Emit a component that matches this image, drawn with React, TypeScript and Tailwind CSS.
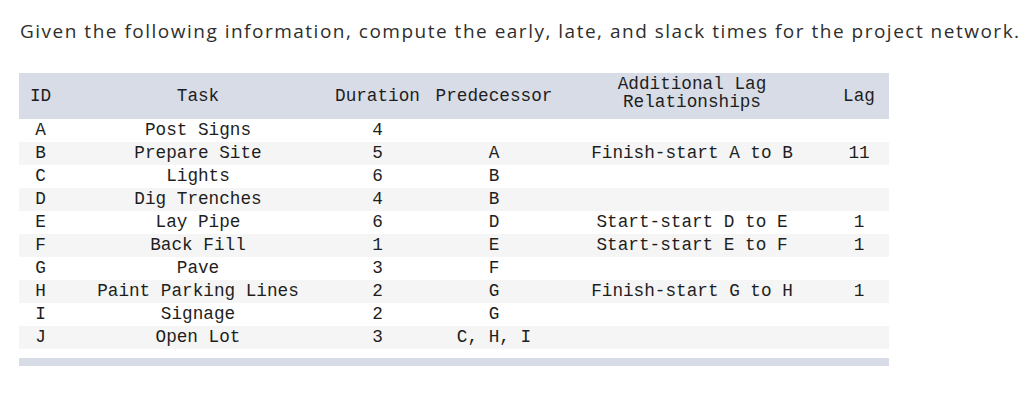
import React from "react";

const rows = [
  ["A", "Post Signs", "4", "", "", ""],
  ["B", "Prepare Site", "5", "A", "Finish-start A to B", "11"],
  ["C", "Lights", "6", "B", "", ""],
  ["D", "Dig Trenches", "4", "B", "", ""],
  ["E", "Lay Pipe", "6", "D", "Start-start D to E", "1"],
  ["F", "Back Fill", "1", "E", "Start-start E to F", "1"],
  ["G", "Pave", "3", "F", "", ""],
  ["H", "Paint Parking Lines", "2", "G", "Finish-start G to H", "1"],
  ["I", "Signage", "2", "G", "", ""],
  ["J", "Open Lot", "3", "C, H, I", "", ""],
];

export default function App() {
  return (
    <div className="w-[1030px] h-[393px] bg-white">
      <p className="pt-[17px] pl-[20px] text-[19px] leading-[28px] tracking-[1.5px] text-[#2e2e2e] font-['Open_Sans',sans-serif] whitespace-nowrap">
        Given the following information, compute the early, late, and slack times for the project network.
      </p>
      <div className="ml-[19px] mt-[28px] w-[870px] font-['Liberation_Mono',monospace] text-[17.7px] text-[#1e1e1e]">
        <div className="grid grid-cols-[43px_272px_87px_146px_250px_72px] h-[46px] bg-[#d8dce6] items-center text-center">
          <div>ID</div>
          <div>Task</div>
          <div>Duration</div>
          <div>Predecessor</div>
          <div className="leading-[18px] flex flex-col mb-[6px]">
            <span>Additional Lag</span>
            <span>Relationships</span>
          </div>
          <div className="pl-[12px]">Lag</div>
        </div>
        {rows.map((r, i) => (
          <div
            key={r[0]}
            className={`grid grid-cols-[43px_272px_87px_146px_250px_72px] h-[23px] items-center text-center leading-[23px] ${
              i % 2 === 1 ? "bg-[#f5f5f5]" : "bg-white"
            }`}
          >
            <div>{r[0]}</div>
            <div className="whitespace-pre">{r[1]}</div>
            <div>{r[2]}</div>
            <div className="whitespace-pre">{r[3]}</div>
            <div className="whitespace-pre">{r[4]}</div>
            <div className="pl-[12px]">{r[5]}</div>
          </div>
        ))}
        <div className="mt-[9px] h-[8px] bg-[#d8dce6]" />
      </div>
    </div>
  );
}
